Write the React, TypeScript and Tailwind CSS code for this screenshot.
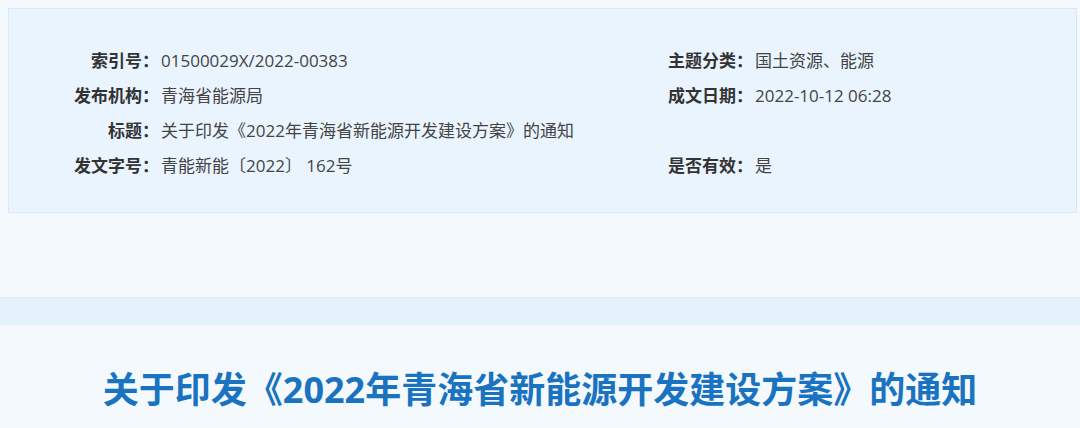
const rows: [string, string, string, string][] = [
  ["索引号", "01500029X/2022-00383", "主题分类", "国土资源、能源"],
  ["发布机构", "青海省能源局", "成文日期", "2022-10-12 06:28"],
  ["标题", "关于印发《2022年青海省新能源开发建设方案》的通知", "", ""],
  ["发文字号", "青能新能〔2022〕 162号", "是否有效", "是"],
];

const Field = ({ label, value, width }: { label: string; value: string; width: string }) => (
  <div className="flex items-center">
    <span className={`${width} text-right font-bold text-[#333]`}>{label ? `${label}：` : ""}</span>
    <span className="ml-[2px] text-[#444]">{value}</span>
  </div>
);

const App = () => {
  return (
    <div
      className="w-[1080px] h-[428px] overflow-hidden bg-[#f4f9fe]"
      style={{ fontFamily: '"Open Sans", "Noto Sans CJK SC", sans-serif' }}
    >
      <div className="ml-2 mt-2 w-[1069px] h-[205px] bg-[#e9f4fe] border border-[#d8e8f6] pt-[34px]">
        {rows.map(([l1, v1, l2, v2]) => (
          <div key={l1} className="flex items-center h-[35px] text-[17px]">
            <div className="w-[659px]">
              <Field label={l1} value={v1} width="w-[150px]" />
            </div>
            {l2 && <Field label={l2} value={v2} width="w-[85px]" />}
          </div>
        ))}
      </div>
      <div className="mt-[84px] h-[28px] bg-[#e3f2fd] border-t border-b border-[#e6eff7]" />
      <h1 className="mt-[41px] text-center text-[36px] leading-[48px] font-bold text-[#1a73c1]">
        关于印发《2022年青海省新能源开发建设方案》的通知
      </h1>
    </div>
  );
};

export default App;
